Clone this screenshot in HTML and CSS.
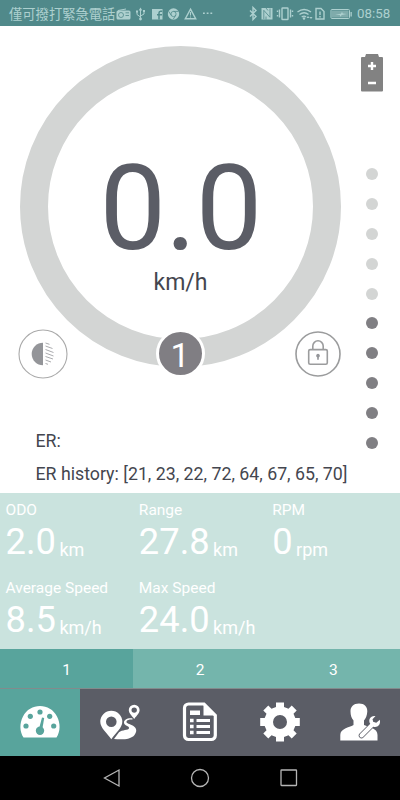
FILE: index.html
```html
<!DOCTYPE html>
<html lang="en">
<head>
	<meta charset="UTF-8">
	<meta name="viewport" content="width=device-width, initial-scale=1.0">
	<title>Dashboard</title>
	<link rel="stylesheet" href="styles.css">
</head>
<body>
	<div class="wrapper">
		<header class="status-bar">
			<span class="carrier">僅可撥打緊急電話</span>
			<svg class="status-left" width="98" height="26" viewBox="0 0 98 26">
				<!-- radio -->
				<path d="M2 10.500h11a1.500 1.500 0 0 1 1.500 1.500v6a1.500 1.500 0 0 1-1.500 1.500H2a1.500 1.500 0 0 1-1.500-1.500v-6A1.500 1.500 0 0 1 2 10.500z"/>
				<path class="line" d="M2 10.500l8-1.500"/>
				<circle class="hole-line" cx="5" cy="15" r="2.500"/>
				<path class="hole-line" d="M9.500 12.800H13M9.500 15.500H13"/>
				<!-- usb -->
				<path class="line" d="M24.500 9v10M21 11.500v3l3.500 2.500M28 11v3l-3.500 2"/>
				<path d="M24.500 7.500l1.800 3h-3.600zM20 10.500h2v2h-2zM27 10h2v2h-2z"/><circle cx="24.500" cy="19" r="1.400"/>
				<!-- facebook -->
				<path d="M36 9h10.500v10.500H36z"/>
				<path class="hole-line fb" d="M43 19.500v-6.500q0-1.800 1.600-1.800h1.600M41 14.800h5"/>
				<!-- chrome -->
				<circle cx="57.500" cy="14" r="5.700"/><circle class="hole-line" cx="57.500" cy="14" r="2.600"/>
				<path class="hole-line" d="M57.500 11.400h5M55.200 15.300l-2.500-4M59.700 15.300l-2.500 4"/>
				<!-- warning -->
				<path class="line bold" d="M74.500 9.200l5.200 9.500H69.300z"/><path class="line" d="M74.500 12v3.500M74.500 16.500v1"/>
				<path d="M87 12.500h1.800v1.600H87zM90.700 12.500h1.800v1.600h-1.800zM94.400 12.500h1.800v1.600h-1.800z"/>
			</svg>
			<svg class="status-right" width="108" height="26" viewBox="0 0 108 26">
				<!-- bluetooth -->
				<path class="line bold" d="M2 10.500l6 6-3 3V7.500l3 3-6 6"/>
				<!-- nfc -->
				<path d="M13.500 8h11v11.500h-11z"/>
				<path class="hole-line" d="M15.800 19V10.300l6.200 7V8.500M18 8l2 2.500M18 19.500v-3" />
				<!-- vibrate -->
				<rect class="line bold" x="34" y="8" width="6" height="11.500" rx=".6"/>
				<path class="line bold" d="M31.500 9.500v8M42.500 9.500v8M29.500 10.500v1.500M29.500 15v1.500M44.500 10.500v1.500M44.500 15v1.500"/>
				<!-- wifi -->
				<path class="line bold" d="M49.500 12q6.500-5 13.500 0M51.500 14.500q4.700-3.500 9 0M53.700 17q2.500-1.800 4.300 0"/>
				<circle cx="56" cy="18.500" r="1.200"/><path d="M60 16l1.500 2h-3zM63 19l-1.500-2h3z"/>
				<!-- sim -->
				<path class="line bold" d="M68 8.500h5l3 3v7.500h-8z"/><path class="line bold" d="M72 11.500v3.500M72 16v1.500"/>
				<!-- charge -->
				<rect class="line" x="83" y="9.500" width="18.500" height="9" rx="1"/>
				<rect class="dim" x="84" y="10.500" width="16.500" height="7"/>
				<path d="M87 14.500l6-.8 1-2 .8 1.800 4 .5-5 1-1.500 1.800-.5-1.800zM102.500 12h1.300v4.500h-1.300z"/>
			</svg>
			<span class="clock">08:58</span>
		</header>

		<main class="ride">
			<section class="gauge-side">
				<div class="gauge">
					<div class="speed">0.0</div>
					<div class="speed-unit">km/h</div>
					<div class="assist">1</div>
					<svg class="round-button light" viewBox="0 0 50 50">
						<circle class="light-ring" cx="25" cy="25" r="24"/>
						<path fill="#949599" d="M25 13.700v22.600a11.300 11.300 0 0 1 0-22.600z"/>
						<path class="beam" d="M27.500 14l4 1.300M27.500 17l7 2.500M27.500 20.500l8 3M27.500 24l8 3M27.500 27.500l7.500 2.500M27.500 31l5.500 2M27.500 34.500l2.500 .8"/>
					</svg>
					<svg class="round-button lock" viewBox="0 0 46 46">
						<circle cx="23" cy="23" r="22"/>
						<rect x="13.700" y="18.600" width="18.600" height="14.600" rx="1.500"/>
						<path d="M17.800 18.500v-3.500a5.200 5.200 0 0 1 10.400 0v3.500"/>
						<path class="keyhole" d="M23 22.800a1.900 1.900 0 0 1 .8 3.600v2.300h-1.600v-2.300a1.900 1.900 0 0 1 .8-3.600z"/>
					</svg>
				</div>
				<div class="errors">
					<p>ER:</p>
					<p>ER history: [21, 23, 22, 72, 64, 67, 65, 70]</p>
				</div>
			</section>
			<aside class="battery">
				<svg width="22" height="38" viewBox="0 0 22 38">
					<path fill="#828282" d="M5 0h12l1 3h3a1 1 0 0 1 1 1v32.500a1 1 0 0 1-1 1H1a1 1 0 0 1-1-1V4a1 1 0 0 1 1-1h3z"/>
					<path stroke="#fff" stroke-width="2.400" d="M7 12h8M11 8v8M7 29h8"/>
				</svg>
				<ul class="levels">
					<li></li>
					<li></li>
					<li></li>
					<li></li>
					<li></li>
					<li class="on"></li>
					<li class="on"></li>
					<li class="on"></li>
					<li class="on"></li>
					<li class="on"></li>
				</ul>
			</aside>
		</main>

		<section class="stats">
			<div class="stat"><h2>ODO</h2><p>2.0 <span>km</span></p></div>
			<div class="stat"><h2>Range</h2><p>27.8 <span>km</span></p></div>
			<div class="stat"><h2>RPM</h2><p>0 <span>rpm</span></p></div>
			<div class="stat"><h2>Average Speed</h2><p>8.5 <span>km/h</span></p></div>
			<div class="stat"><h2>Max Speed</h2><p>24.0 <span>km/h</span></p></div>
		</section>

		<div class="pages">
			<a class="active">1</a>
			<a>2</a>
			<a>3</a>
		</div>

		<nav class="menu">
			<a class="active">
				<svg viewBox="0 0 40 40">
					<path d="M3.500 35.500C-.5 29.500-.5 21 3 14.500 6.500 7.500 13 4 20 4s13.500 3.500 17 10.500c3.500 6.500 3.500 15-.5 21z"/>
					<g fill="#58a49c"><circle cx="6" cy="24" r="2.600"/><circle cx="10.300" cy="14.300" r="2.600"/><circle cx="20" cy="10" r="2.600"/><circle cx="29.700" cy="14.300" r="2.600"/><circle cx="33.700" cy="24" r="2.600"/><circle cx="20" cy="28.700" r="4.200"/><path d="M18.700 28l3.300-12.500 2.200.6-2.200 13z"/></g>
				</svg>
			</a>
			<a>
				<svg viewBox="0 0 40 40">
					<path fill-rule="evenodd" d="M11.300 8.700a11 11 0 0 1 11 11c0 6-6.300 10.800-11 17.500C6.500 30.500.3 25.700.3 19.700a11 11 0 0 1 11-11zm0 5.700a5.300 5.300 0 1 0 0 10.600 5.300 5.300 0 0 0 0-10.600z"/>
					<path fill-rule="evenodd" d="M34.200 2.700a5.400 5.400 0 0 1 5.400 5.400c0 3-2.600 5.300-5.400 8.900-2.800-3.600-5.400-5.900-5.400-8.900a5.400 5.400 0 0 1 5.400-5.400zm0 2.700a2.700 2.700 0 1 0 0 5.400 2.700 2.700 0 0 0 0-5.400z"/>
					<path d="M32.500 16.500c-5-.8-8.500 1.500-8.500 4 0 3.700 5.500 3 5 5.700-.4 2.300-7 1.300-10 4l-5 6.700c8 1 17 .5 20.500-4 3.500-4.800 1.500-8-3-10-3-1.300-5.500-2-5-3.500.4-1.400 3-2 6-1.900z"/>
				</svg>
			</a>
			<a>
				<svg viewBox="0 0 40 40">
					<path class="outline" d="M8.500 2h15.500L35.300 13.500v20a4 4 0 0 1-4 4H8.500a4 4 0 0 1-4-4V6a4 4 0 0 1 4-4z"/>
					<path d="M23.500 2v11.500h12zM10 8.500H20v4.500H10z"/>
					<path d="M10 16.800h3.600v3.500H10zM10 22.800h3.600v3.500H10zM10 28.700h3.600v3.500H10zM16.500 17H30v3H16.500zM16.500 23H30v3H16.500zM16.500 29H30v3H16.500z"/>
				</svg>
			</a>
			<a>
				<svg viewBox="0 0 40 40">
					<path fill-rule="evenodd" d="M16 .4h8v4.500l4.500 1.900 3.200-3.200 5 5-3.200 3.200 1.800 4.200h4.500v8h-4.500l-1.800 4.200 3.200 3.200-5 5-3.200-3.200-4.500 1.900v4.500h-8v-4.500l-4.500-1.900-3.200 3.200-5-5 3.200-3.200L4.700 24H.2v-8h4.500l1.800-4.200-3.200-3.200 5-5 3.200 3.200L16 4.900zM20 13a7 7 0 1 0 0 14 7 7 0 0 0 0-14z"/>
				</svg>
			</a>
			<a>
				<svg viewBox="0 0 40 40">
					<path d="M19 1.500c5.500 0 8.500 3.500 8.300 8-.2 4-1.500 7-3.300 9v4.500c5 2.500 13.500 3 13.500 10v5.500H.3V33c0-6.500 8.700-7.500 13.200-10v-4.500c-1.800-2-3-5-3-9-.2-4.500 3-8 8.500-8z"/>
					<path class="wrench-edge" d="M21.500 33.500L33 22"/>
					<path class="wrench" d="M21.500 33.500L33 22"/>
					<path d="M35.500 14c-5-.8-7.500 3.500-5.500 7.500l3.500 3.300c4 1 7.500-2 6.300-7l-3.500 3-3-.7-.8-2.800z"/>
				</svg>
			</a>
		</nav>

		<footer class="system-nav">
			<svg viewBox="0 0 20 20"><path d="M18 2v16L3.500 10z"/></svg>
			<svg viewBox="0 0 20 20"><circle cx="10" cy="10" r="8.500"/></svg>
			<svg viewBox="0 0 20 20"><rect x="2" y="2" width="15.500" height="15.500" rx=".5"/></svg>
		</footer>
	</div>
</body>
</html>
```
FILE: styles.css
```css
* {
	box-sizing: border-box;
}
body {
	margin: 0;
	background-color: #fff;
	font-family: Roboto, "Noto Sans CJK TC", sans-serif;
}
h2, p, ul {
	margin: 0;
	padding: 0;
	font-weight: normal;
}
svg {
	display: block;
}
.wrapper {
	display: flex;
	flex-direction: column;
	width: 400px;
	height: 800px;
	overflow: hidden;
}
.status-bar {
	display: flex;
	align-items: center;
	flex: none;
	height: 26px;
	padding: 0 9px;
	background-color: #50898a;
	color: #add0cf;
}
.status-bar svg {
	fill: #add0cf;
	flex: none;
}
.status-bar .line {
	fill: none;
	stroke: #add0cf;
	stroke-width: 1;
}
.status-bar .bold {
	stroke-width: 1.4;
}
.status-bar .hole-line {
	fill: none;
	stroke: #50898a;
	stroke-width: .8;
}
.status-bar .fb {
	stroke-width: 1.5;
}
.status-bar .dim {
	fill: #7fabab;
}
.carrier {
	width: 107px;
	padding-top: 3px;
	font-size: 13.3px;
	line-height: 26px;
	white-space: nowrap;
}
.status-right {
	margin-left: 34px;
}
.clock {
	margin-left: 1px;
	font-size: 13.3px;
	line-height: 28px;
	padding-top: 2px;
}
.ride {
	display: flex;
	flex: none;
	height: 467px;
}
.gauge-side {
	width: 343px;
	padding: 20px 0 0 20px;
}
.gauge {
	position: relative;
	width: 321px;
	height: 321px;
	padding-top: 82px;
	border: 28px solid #d3d5d4;
	border-radius: 50%;
	text-align: center;
	color: #5b5d66;
}
.speed {
	font-size: 118.5px;
	line-height: 106px;
	letter-spacing: -.8px;
}
.speed-unit {
	margin-top: 7px;
	font-size: 23px;
	line-height: 28px;
	color: #44464f;
}
.assist {
	position: absolute;
	left: 107.500px;
	top: 255px;
	width: 49px;
	height: 49px;
	border: 3px solid #fff;
	border-radius: 50%;
	background-color: #807e83;
	color: #fff;
	font-size: 34px;
	line-height: 46px;
}
.round-button {
	position: absolute;
	fill: none;
}
.light {
	left: -30px;
	top: 255px;
	width: 50px;
	height: 50px;
}
.light-ring {
	stroke: #aaa;
	stroke-width: 1.1;
}
.beam {
	stroke: #949599;
	stroke-width: .8;
}
.lock {
	left: 247px;
	top: 257px;
	width: 46px;
	height: 46px;
	stroke: #9b9c9d;
	stroke-width: 1.6;
}
.keyhole {
	fill: #949599;
	stroke: none;
}
.errors {
	padding: 58px 0 0 15.500px;
	color: #44464f;
	font-size: 17.750px;
	line-height: 33px;
	white-space: nowrap;
}
.battery {
	display: flex;
	flex-direction: column;
	align-items: center;
	width: 57px;
	padding-top: 28px;
}
.levels {
	display: flex;
	flex-direction: column;
	gap: 17.9px;
	margin-top: 76px;
	list-style: none;
}
.levels li {
	width: 12px;
	height: 12px;
	border-radius: 50%;
	background-color: #d3d5d4;
}
.levels .on {
	background-color: #807f83;
}
.stats {
	display: grid;
	grid-template-columns: repeat(3, 1fr);
	grid-template-rows: 78px 78px;
	flex: none;
	height: 156px;
	background-color: #cae3de;
	color: #fff;
}
.stat {
	padding: 8px 0 0 5.500px;
}
.stat h2 {
	font-size: 15.500px;
	line-height: 18px;
}
.stat p {
	font-size: 36.300px;
	line-height: 46px;
	word-spacing: -5.500px;
}
.stat span {
	position: relative;
	top: 2px;
	font-size: 18px;
}
.pages {
	display: flex;
	flex: none;
	height: 40px;
	border-bottom: 1px solid #828b8c;
	background-color: #74b5ac;
}
.pages a {
	flex: 1;
	color: #fff;
	font-size: 15.500px;
	line-height: 42px;
	text-align: center;
}
.pages .active, .menu .active {
	background-color: #58a49c;
}
.menu {
	display: flex;
	flex: none;
	height: 67px;
	background-color: #5b5d66;
}
.menu a {
	display: flex;
	justify-content: center;
	flex: 1;
	padding-top: 13px;
}
.menu svg {
	width: 40px;
	height: 40px;
	fill: #fff;
	overflow: visible;
}
.menu .outline {
	fill: none;
	stroke: #fff;
	stroke-width: 3.200;
}
.wrench, .wrench-edge {
	stroke: #fff;
	stroke-width: 4;
	stroke-linecap: round;
}
.wrench-edge {
	stroke: #5b5d66;
	stroke-width: 5.500;
}
.system-nav {
	display: flex;
	justify-content: center;
	gap: 69px;
	flex: 1;
	padding-top: 12px;
	background-color: #000;
}
.system-nav svg {
	width: 20px;
	height: 20px;
	fill: none;
	stroke: #b5b5b5;
	stroke-width: 1.3;
}
```
